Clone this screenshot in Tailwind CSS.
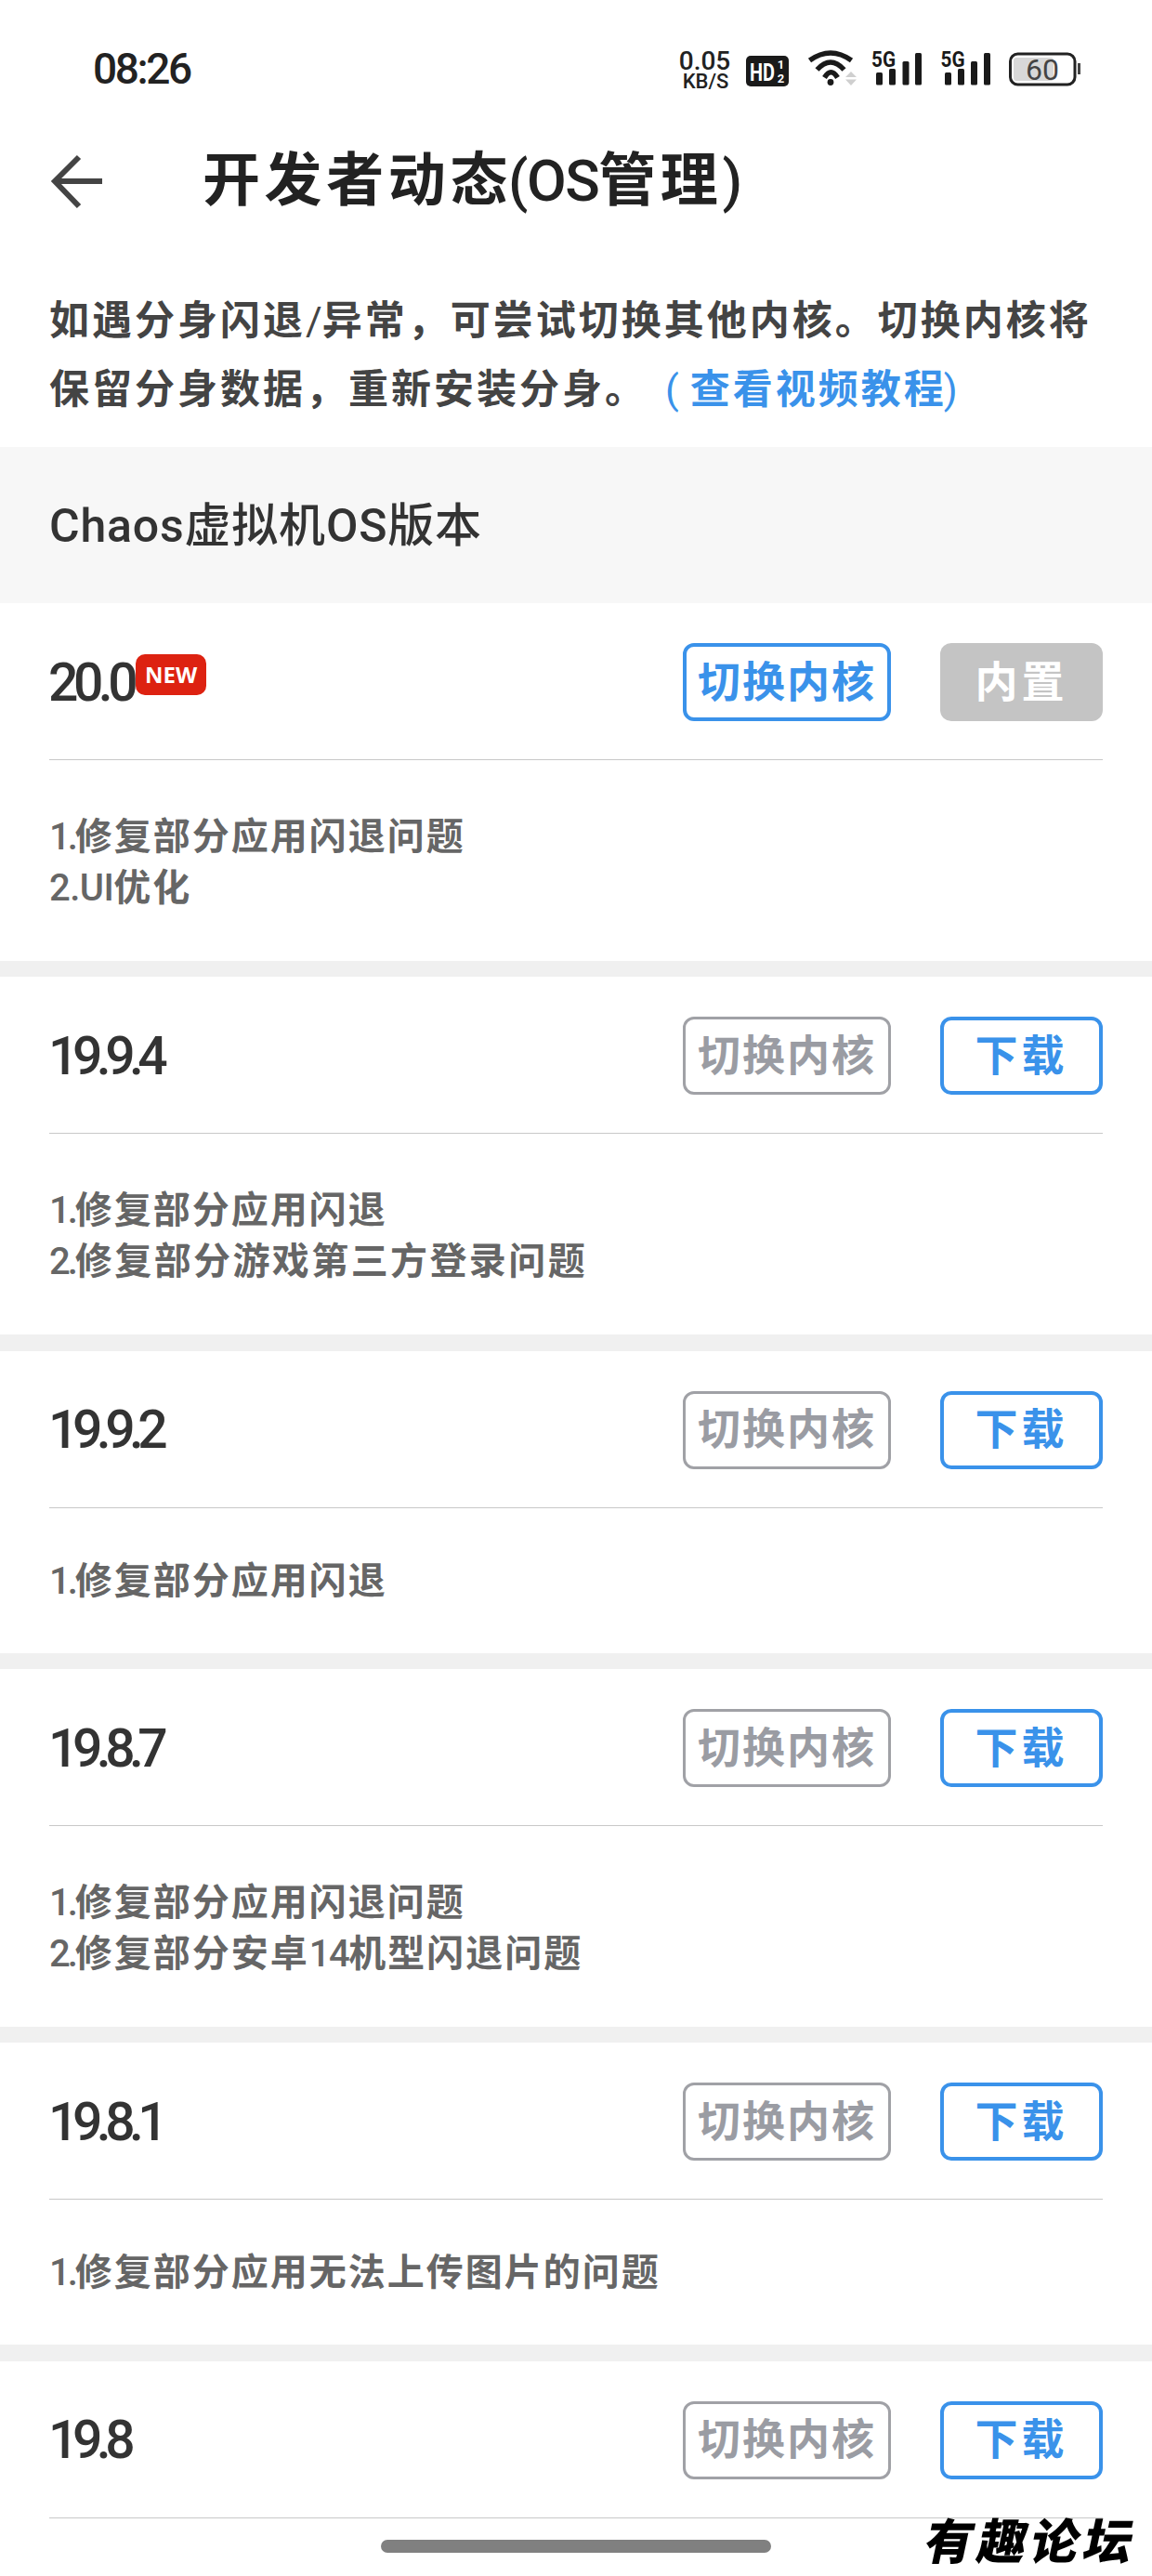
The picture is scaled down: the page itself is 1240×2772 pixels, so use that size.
<!DOCTYPE html>
<html lang="zh-CN">
<head>
<meta charset="utf-8">
<title>开发者动态(OS管理)</title>
<script src="https://cdn.jsdelivr.net/npm/@tailwindcss/browser@4"></script>
</head>
<body class="m-0 bg-white">
<div class="relative w-[1240px] h-[2772px] overflow-hidden bg-white font-['Roboto','Noto_Sans_CJK_SC',sans-serif]">

  <!-- status bar -->
  <div class="flex items-center justify-between h-[148px] pl-[100px] pr-[70px]">
    <span class="text-[46px] font-medium tracking-[-2.4px] text-[#222]">08:26</span>
    <svg class="w-[440px] h-[60px] mt-[2px]" viewBox="730 45 440 60" fill="none">
      <text x="758.5" y="75" text-anchor="middle" font-size="28" font-weight="500" fill="#222" font-family="Roboto">0.05</text>
      <text x="759.5" y="95" text-anchor="middle" font-size="22" font-weight="500" fill="#222" font-family="Roboto">KB/S</text>
      <rect x="803" y="60" width="46" height="33" rx="5" fill="#1a1a1a"/>
      <text x="807" y="87" font-size="25" font-weight="700" fill="#fff" font-family="Roboto" textLength="27" lengthAdjust="spacingAndGlyphs">HD</text>
      <text x="840.5" y="74" text-anchor="middle" font-size="13" font-weight="700" fill="#fff" font-family="Roboto">1</text>
      <text x="840.5" y="89" text-anchor="middle" font-size="13" font-weight="700" fill="#fff" font-family="Roboto">2</text>
      <g stroke="#1a1a1a" stroke-width="5.5">
        <path d="M871.5 65 Q894 49 916.5 65"/>
        <path d="M879.5 75 Q894 59 908.5 75"/>
        <path d="M887.5 83.5 Q894.5 72 901.5 83.5"/>
      </g>
      <circle cx="894" cy="88.5" r="3.4" fill="#1a1a1a"/>
      <path d="M916 77 L922 83 H910 Z M910 85.5 H922 L916 92 Z" fill="#cfcfcf"/>
      <text x="951" y="72" text-anchor="middle" font-size="23" font-weight="700" fill="#1a1a1a" font-family="Roboto" textLength="26" lengthAdjust="spacingAndGlyphs">5G</text>
      <g fill="#1a1a1a">
        <rect x="943" y="78" width="7" height="13.5" rx="1.5"/>
        <rect x="957" y="74" width="7" height="17.5" rx="1.5"/>
        <rect x="971.5" y="66" width="7" height="25.5" rx="1.5"/>
        <rect x="985" y="57" width="7" height="34.5" rx="1.5"/>
        <rect x="1017" y="78" width="7" height="13.5" rx="1.5"/>
        <rect x="1031" y="74" width="7" height="17.5" rx="1.5"/>
        <rect x="1045" y="66" width="7" height="25.5" rx="1.5"/>
        <rect x="1059" y="57" width="7" height="34.5" rx="1.5"/>
      </g>
      <text x="1025.5" y="72" text-anchor="middle" font-size="23" font-weight="700" fill="#1a1a1a" font-family="Roboto" textLength="26" lengthAdjust="spacingAndGlyphs">5G</text>
      <rect x="1091" y="62" width="43" height="25" rx="3" fill="#d8d8d8"/>
      <rect x="1087.5" y="58" width="69.5" height="33" rx="8" stroke="#222" stroke-width="3"/>
      <text x="1122" y="86" text-anchor="middle" font-size="32" fill="#444" font-family="Roboto">60</text>
      <rect x="1160" y="68" width="3" height="12" fill="#444"/>
    </svg>
  </div>

  <!-- header -->
  <div class="flex items-center h-[94px] pl-[53px]">
    <svg class="w-[60px] h-[60px] shrink-0" viewBox="52 164 60 60" fill="none" stroke="#444" stroke-width="6">
      <path d="M109 194 H58"/>
      <path d="M84 168 L58 194 L84 221"/>
    </svg>
    <h1 class="ml-[105px] text-[62px] font-bold leading-none tracking-[4.6px] text-[#222] whitespace-nowrap">开发者动态<span class="tracking-[-1.5px] font-medium ml-[-4px]">(OS</span>管理<span class="font-medium">)</span></h1>
  </div>

  <!-- notice -->
  <p class="pt-[66px] pb-[25px] pl-[53px] text-[43px] font-bold leading-[74px] tracking-[3px] text-[#444] whitespace-nowrap">如遇分身闪退<span class="font-normal tracking-[0px]">/</span>异常，可尝试切换其他内核。切换内核将<br>保留分身数据，重新安装分身。<span class="ml-[19px] font-normal text-[#3a92ea] tracking-[12px]">(</span><span class="text-[#3a92ea]">查看视频教程</span><span class="font-normal text-[#3a92ea] ml-[-3px]">)</span></p>

  <!-- section title -->
  <div class="flex items-center h-[168px] pl-[53px] pt-[2px] bg-[#f7f7f7]">
    <h2 class="text-[50px] font-medium tracking-[0.8px] text-[#333] whitespace-nowrap">Chaos虚拟机OS版本</h2>
  </div>

  <!-- 20.0 -->
  <section class="h-[384.8px] bg-white">
    <div class="flex items-start justify-between h-[168px] pt-[43px] pl-[52px] pr-[53px]">
      <div class="flex items-center h-[84px]">
        <span class="text-[57px] font-medium tracking-[-5.5px] text-[#333] leading-none">20.0</span>
        <span class="flex items-center justify-center w-[76px] h-[44px] ml-[3px] mb-[16px] rounded-[10px] bg-[#dd2211] text-[24px] font-['Open_Sans',sans-serif] font-bold leading-none text-white">NEW</span>
      </div>
      <div class="flex gap-[53px]">
        <button class="flex items-center justify-center w-[224px] h-[84px] border-[4px] border-[#3a92ea] rounded-[12px] text-[46px] font-bold tracking-[2px] text-[#3a92ea]">切换内核</button>
        <button class="flex items-center justify-center w-[175px] h-[84px] rounded-[12px] bg-[#c4c4c4] text-[46px] font-bold tracking-[4px] text-white">内置</button>
      </div>
    </div>
    <div class="h-px mx-[53px] bg-[#c8c8c8]"></div>
    <div class="pt-[55px] pl-[53px] text-[40px] font-bold leading-[55px] tracking-[2px] text-[#666]">
      <p><span class="font-medium tracking-[-3px]">1.</span>修复部分应用闪退问题</p>
      <p><span class="font-medium tracking-[-0.5px]">2.UI</span>优化</p>
    </div>
  </section>
  <div class="h-[17.5px] bg-[#f0f0f0]"></div>

  <!-- 19.9.4 -->
  <section class="h-[384.8px] bg-white">
    <div class="flex items-start justify-between h-[168px] pt-[43px] pl-[52px] pr-[53px]">
      <div class="flex items-center h-[84px]"><span class="text-[57px] font-medium tracking-[-6.5px] text-[#333] leading-none">19.9.4</span></div>
      <div class="flex gap-[53px]">
        <button class="flex items-center justify-center w-[224px] h-[84px] border-[3px] border-[#a0a1a6] rounded-[12px] text-[46px] font-bold tracking-[2px] text-[#9a9ca3]">切换内核</button>
        <button class="flex items-center justify-center w-[175px] h-[84px] border-[4px] border-[#3a92ea] rounded-[12px] text-[46px] font-bold tracking-[4px] text-[#3a92ea]">下载</button>
      </div>
    </div>
    <div class="h-px mx-[53px] bg-[#c8c8c8]"></div>
    <div class="pt-[55px] pl-[53px] text-[40px] font-bold leading-[55px] tracking-[2px] text-[#666]">
      <p><span class="font-medium tracking-[-3px]">1.</span>修复部分应用闪退</p>
      <p><span class="font-medium tracking-[-3px]">2.</span><span class="tracking-[2.4px]">修复部分游戏第三方登录问题</span></p>
    </div>
  </section>
  <div class="h-[17.5px] bg-[#f0f0f0]"></div>

  <!-- 19.9.2 -->
  <section class="h-[325px] bg-white">
    <div class="flex items-start justify-between h-[168px] pt-[43px] pl-[52px] pr-[53px]">
      <div class="flex items-center h-[84px]"><span class="text-[57px] font-medium tracking-[-6.5px] text-[#333] leading-none">19.9.2</span></div>
      <div class="flex gap-[53px]">
        <button class="flex items-center justify-center w-[224px] h-[84px] border-[3px] border-[#a0a1a6] rounded-[12px] text-[46px] font-bold tracking-[2px] text-[#9a9ca3]">切换内核</button>
        <button class="flex items-center justify-center w-[175px] h-[84px] border-[4px] border-[#3a92ea] rounded-[12px] text-[46px] font-bold tracking-[4px] text-[#3a92ea]">下载</button>
      </div>
    </div>
    <div class="h-px mx-[53px] bg-[#c8c8c8]"></div>
    <div class="pt-[51px] pl-[53px] text-[40px] font-bold leading-[55px] tracking-[2px] text-[#666]">
      <p><span class="font-medium tracking-[-3px]">1.</span>修复部分应用闪退</p>
    </div>
  </section>
  <div class="h-[17.5px] bg-[#f0f0f0]"></div>

  <!-- 19.8.7 -->
  <section class="h-[384.8px] bg-white">
    <div class="flex items-start justify-between h-[168px] pt-[43px] pl-[52px] pr-[53px]">
      <div class="flex items-center h-[84px]"><span class="text-[57px] font-medium tracking-[-6.5px] text-[#333] leading-none">19.8.7</span></div>
      <div class="flex gap-[53px]">
        <button class="flex items-center justify-center w-[224px] h-[84px] border-[3px] border-[#a0a1a6] rounded-[12px] text-[46px] font-bold tracking-[2px] text-[#9a9ca3]">切换内核</button>
        <button class="flex items-center justify-center w-[175px] h-[84px] border-[4px] border-[#3a92ea] rounded-[12px] text-[46px] font-bold tracking-[4px] text-[#3a92ea]">下载</button>
      </div>
    </div>
    <div class="h-px mx-[53px] bg-[#c8c8c8]"></div>
    <div class="pt-[55px] pl-[53px] text-[40px] font-bold leading-[55px] tracking-[2px] text-[#666]">
      <p><span class="font-medium tracking-[-3px]">1.</span>修复部分应用闪退问题</p>
      <p><span class="font-medium tracking-[-3px]">2.</span>修复部分安卓<span class="font-medium tracking-[-1.5px]">14</span>机型闪退问题</p>
    </div>
  </section>
  <div class="h-[17.5px] bg-[#f0f0f0]"></div>

  <!-- 19.8.1 -->
  <section class="h-[325px] bg-white">
    <div class="flex items-start justify-between h-[168px] pt-[43px] pl-[52px] pr-[53px]">
      <div class="flex items-center h-[84px]"><span class="text-[57px] font-medium tracking-[-6.5px] text-[#333] leading-none">19.8.1</span></div>
      <div class="flex gap-[53px]">
        <button class="flex items-center justify-center w-[224px] h-[84px] border-[3px] border-[#a0a1a6] rounded-[12px] text-[46px] font-bold tracking-[2px] text-[#9a9ca3]">切换内核</button>
        <button class="flex items-center justify-center w-[175px] h-[84px] border-[4px] border-[#3a92ea] rounded-[12px] text-[46px] font-bold tracking-[4px] text-[#3a92ea]">下载</button>
      </div>
    </div>
    <div class="h-px mx-[53px] bg-[#c8c8c8]"></div>
    <div class="pt-[51px] pl-[53px] text-[40px] font-bold leading-[55px] tracking-[2px] text-[#666]">
      <p><span class="font-medium tracking-[-3px]">1.</span>修复部分应用无法上传图片的问题</p>
    </div>
  </section>
  <div class="h-[17.5px] bg-[#f0f0f0]"></div>

  <!-- 19.8 -->
  <section class="bg-white">
    <div class="flex items-start justify-between h-[168px] pt-[43px] pl-[52px] pr-[53px]">
      <div class="flex items-center h-[84px]"><span class="text-[57px] font-medium tracking-[-6.5px] text-[#333] leading-none">19.8</span></div>
      <div class="flex gap-[53px]">
        <button class="flex items-center justify-center w-[224px] h-[84px] border-[3px] border-[#a0a1a6] rounded-[12px] text-[46px] font-bold tracking-[2px] text-[#9a9ca3]">切换内核</button>
        <button class="flex items-center justify-center w-[175px] h-[84px] border-[4px] border-[#3a92ea] rounded-[12px] text-[46px] font-bold tracking-[4px] text-[#3a92ea]">下载</button>
      </div>
    </div>
    <div class="h-px mx-[53px] bg-[#c8c8c8]"></div>
  </section>

  <!-- home indicator -->
  <div class="absolute left-[410px] top-[2733px] w-[420px] h-[14px] rounded-full bg-[#808080]"></div>
  <!-- watermark -->
  <div class="absolute left-[996px] top-[2708px] text-[52px] font-black leading-[58px] tracking-[5px] text-black -skew-x-12 whitespace-nowrap">有趣论坛</div>
</div>
</body>
</html>
